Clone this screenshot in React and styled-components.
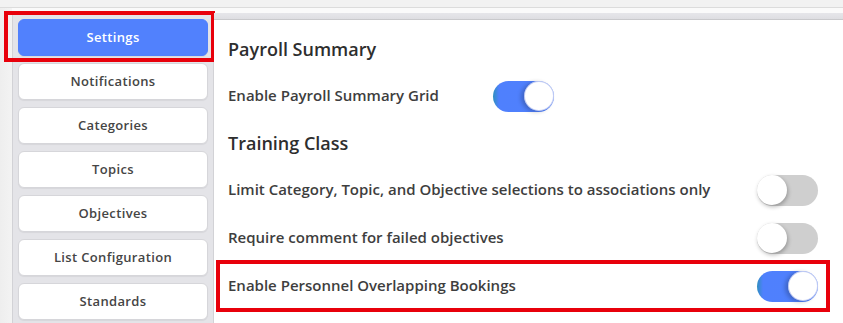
import React from "react";
import styled, { createGlobalStyle } from "styled-components";

const GlobalStyle = createGlobalStyle`
  html, body { margin: 0; padding: 0; }
  body {
    background: #f1f1f1;
    font-family: "Open Sans", sans-serif;
    -webkit-font-smoothing: antialiased;
  }
`;

const Page = styled.div`
  width: 843px;
  height: 323px;
  overflow: hidden;
  display: flex;
  flex-direction: column;
  background: #f1f1f1;
`;

const TopBar = styled.div`
  height: 7px;
  flex: none;
  background: #f2f2f2;
  border-bottom: 1px solid #dcdcdc;
`;

const Workspace = styled.div`
  flex: 1;
  display: flex;
  padding: 5px 0 0 12px;
  background: linear-gradient(to right, #eeeeee 0, #f3f3f3 12px, #fafafa 12px);
`;

const Sidebar = styled.nav`
  position: relative;
  width: 190px;
  flex: none;
  display: flex;
  flex-direction: column;
  gap: 7px;
  padding: 6px 5px;
  background: #e4e4e8;
  border-left: 1px solid #d2d2d6;
  border-right: 1px solid #d2d2d6;
`;

const NavButton = styled.button`
  height: 37px;
  flex: none;
  border-radius: 6px;
  border: 1px solid ${(p) => (p.$active ? "#5080fd" : "#d6d6da")};
  background: ${(p) => (p.$active ? "#5181fd" : "#ffffff")};
  color: ${(p) => (p.$active ? "#ffffff" : "#454545")};
  font-family: "Open Sans", sans-serif;
  font-weight: 600;
  font-size: 13px;
  letter-spacing: 0.35px;
  box-shadow: 0 1px 1px rgba(0, 0, 0, 0.06);
  padding: 0 0 1px;
`;

const Highlight = styled.div`
  position: absolute;
  border: 4px solid #e8000b;
  pointer-events: none;
`;

const Content = styled.main`
  position: relative;
  flex: 1;
  display: flex;
  flex-direction: column;
  background: #ffffff;
`;

const TabStrip = styled.div`
  height: 6px;
  flex: none;
  background: linear-gradient(#e6e6ea, #dedee2);
  border-bottom: 1px solid #c9c9cc;
`;

const Body = styled.div`
  padding: 18px 25px 0 14px;
  display: flex;
  flex-direction: column;
`;

const SectionTitle = styled.h2`
  margin: 0 0 ${(p) => p.$after}px;
  height: 24px;
  line-height: 22px;
  font-family: "Open Sans", sans-serif;
  font-size: 18px;
  font-weight: 600;
  color: #2e2e2e;
`;

const Row = styled.div`
  height: 48px;
  display: flex;
  align-items: center;
  justify-content: ${(p) => (p.$inline ? "flex-start" : "space-between")};
  gap: ${(p) => (p.$inline ? "54px" : "0")};
  margin-bottom: ${(p) => p.$after || 0}px;
`;

const Label = styled.span`
  font-family: "Open Sans", sans-serif;
  font-size: 15px;
  font-weight: 600;
  color: #3e3e3e;
  margin-bottom: 3px;
`;

const Track = styled.span`
  position: relative;
  width: 61px;
  height: 31px;
  flex: none;
  border-radius: 16px;
  background: ${(p) =>
    p.$on
      ? "linear-gradient(to right, #2f8fbf 0, #4f80fd 6px, #5080fd 100%)"
      : "#cfcfcf"};
`;

const Knob = styled.span`
  position: absolute;
  top: 0;
  left: ${(p) => (p.$on ? "31px" : "0")};
  width: 30px;
  height: 30px;
  border-radius: 50%;
  background: #ffffff;
  box-shadow: ${(p) =>
    p.$on
      ? "-3px 1px 4px rgba(0,0,0,0.22), inset 0 0 0 1px rgba(80,110,220,0.35)"
      : "1px 2px 4px rgba(0,0,0,0.28)"};
`;

const Toggle = ({ on }) => (
  <Track $on={on}>
    <Knob $on={on} />
  </Track>
);

const navItems = [
  "Settings",
  "Notifications",
  "Categories",
  "Topics",
  "Objectives",
  "List Configuration",
  "Standards",
];

export default function App() {
  return (
    <>
      <GlobalStyle />
      <Page>
        <TopBar />
        <Workspace>
          <Sidebar>
            {navItems.map((n, i) => (
              <NavButton key={n} $active={i === 0}>
                {n}
              </NavButton>
            ))}
            <Highlight style={{ left: -9, top: -2, width: 203, height: 43 }} />
          </Sidebar>
          <Content>
            <TabStrip />
            <Body>
              <SectionTitle $after={10}>Payroll Summary</SectionTitle>
              <Row $inline $after={12}>
                <Label>Enable Payroll Summary Grid</Label>
                <Toggle on />
              </Row>
              <SectionTitle $after={10}>Training Class</SectionTitle>
              <Row>
                <Label>Limit Category, Topic, and Objective selections to associations only</Label>
                <Toggle />
              </Row>
              <Row>
                <Label>Require comment for failed objectives</Label>
                <Toggle />
              </Row>
              <Row>
                <Label>Enable Personnel Overlapping Bookings</Label>
                <Toggle on />
              </Row>
            </Body>
            <Highlight style={{ left: 2, top: 247, width: 606, height: 44 }} />
          </Content>
        </Workspace>
      </Page>
    </>
  );
}
